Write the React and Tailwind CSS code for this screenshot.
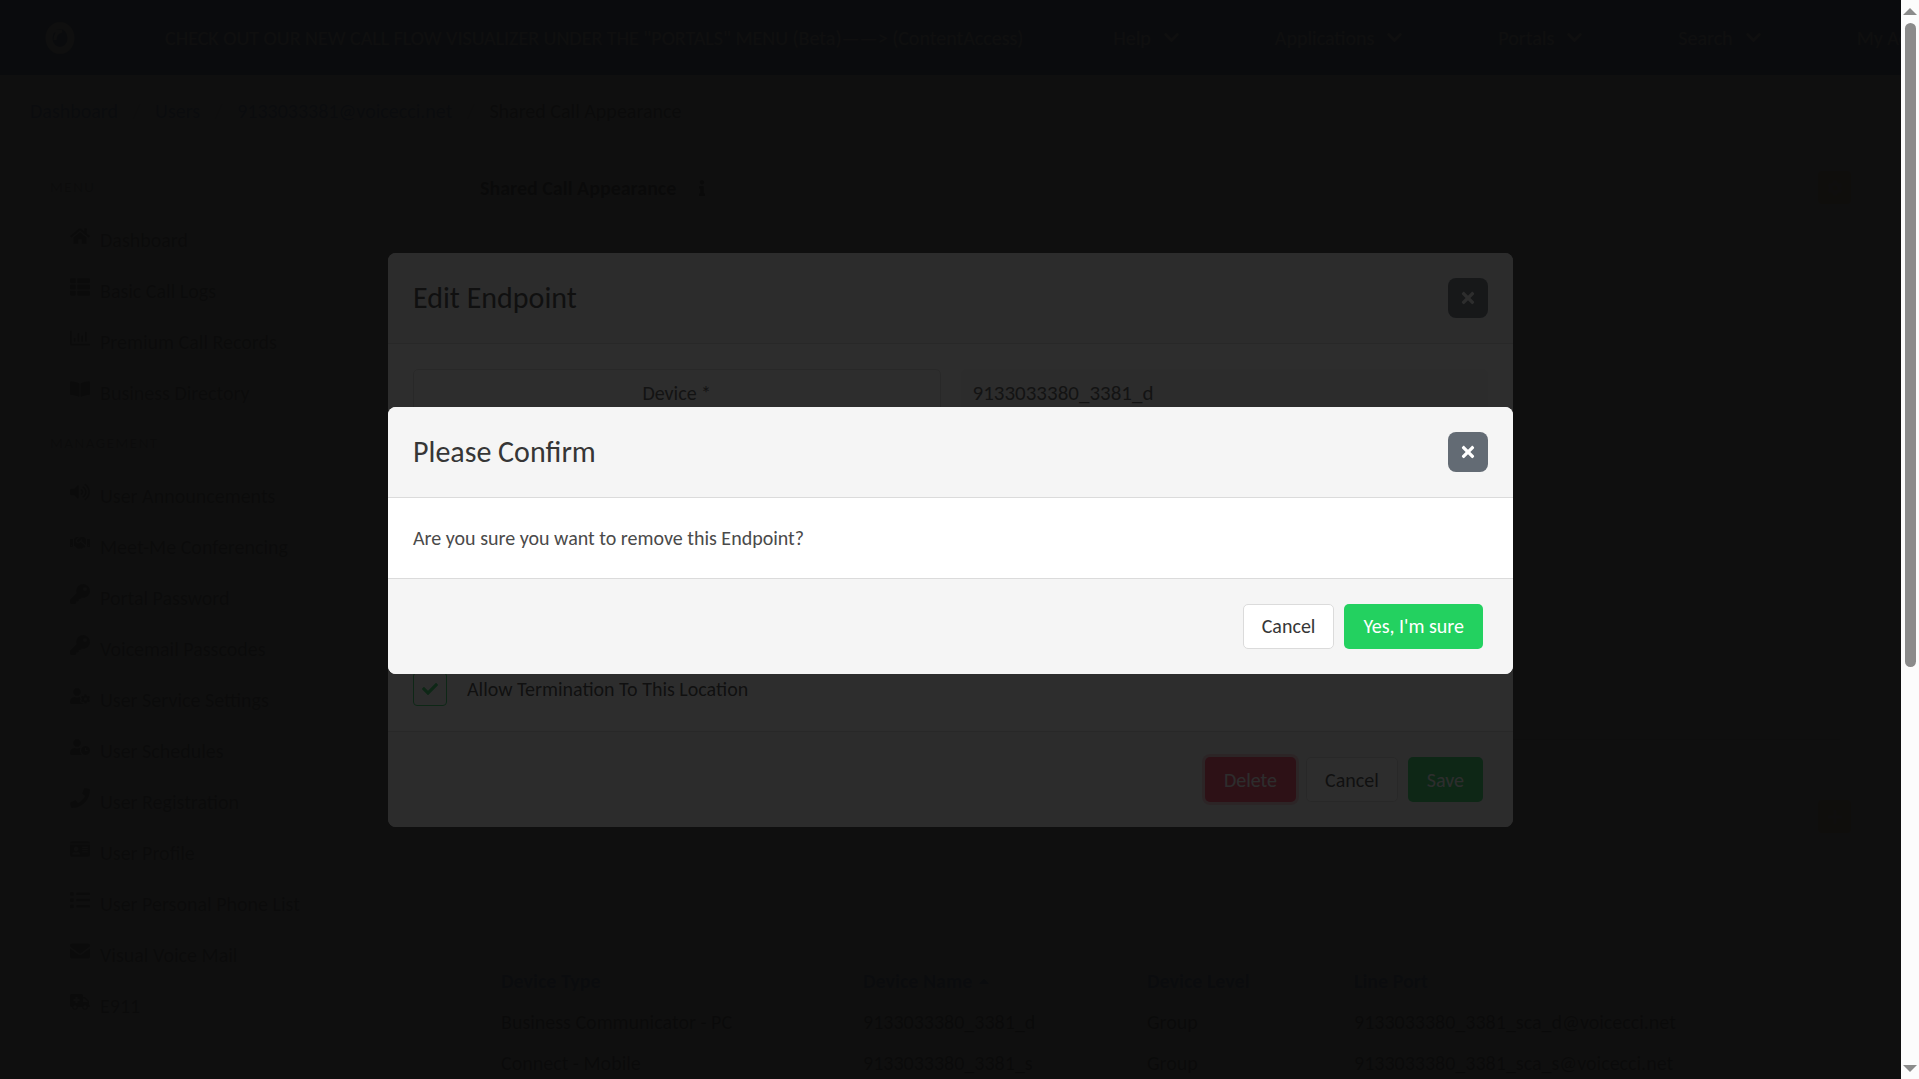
import {
  FaAmbulance,
  FaBookOpen,
  FaCaretUp,
  FaCheck,
  FaChevronDown,
  FaCog,
  FaEnvelope,
  FaHandshake,
  FaHome,
  FaIdCard,
  FaInfo,
  FaKey,
  FaList,
  FaPhone,
  FaPlus,
  FaRegChartBar,
  FaThList,
  FaTimes,
  FaUserClock,
  FaUserCog,
  FaVolumeUp,
} from "react-icons/fa";

const navItems = ["Help", "Applications", "Portals", "Search", "My Account"];

const breadcrumbs = ["Dashboard", "Users", "9133033381@voicecci.net", "Shared Call Appearance"];

const menuItems = [
  { label: "Dashboard", icon: FaHome },
  { label: "Basic Call Logs", icon: FaThList },
  { label: "Premium Call Records", icon: FaRegChartBar },
  { label: "Business Directory", icon: FaBookOpen },
];

const managementItems = [
  { label: "User Announcements", icon: FaVolumeUp },
  { label: "Meet-Me Conferencing", icon: FaHandshake },
  { label: "Portal Password", icon: FaKey },
  { label: "Voicemail Passcodes", icon: FaKey },
  { label: "User Service Settings", icon: FaUserCog },
  { label: "User Schedules", icon: FaUserClock },
  { label: "User Registration", icon: FaPhone },
  { label: "User Profile", icon: FaIdCard },
  { label: "User Personal Phone List", icon: FaList },
  { label: "Visual Voice Mail", icon: FaEnvelope },
  { label: "E911", icon: FaAmbulance },
];

const endpoints = [
  ["Business Communicator - PC", "9133033380_3381_d", "Group", "9133033380_3381_sca_d@voicecci.net"],
  ["Connect - Mobile", "9133033380_3381_s", "Group", "9133033380_3381_sca_s@voicecci.net"],
];

function Logo() {
  return (
    <svg viewBox="0 0 30 32" className="h-8 w-[30px] shrink-0" fill="none" stroke="#e8e8e8">
      <ellipse cx="15" cy="16" rx="11" ry="12.5" strokeWidth="7" />
      <path d="M5 9h12c-5 1-7 4-7 9M25 23c-2 3-5 4-9 4" strokeWidth="3" />
    </svg>
  );
}

function Navbar() {
  return (
    <nav className="flex h-[75px] items-center overflow-hidden bg-[#0a3c96] pl-[45px] whitespace-nowrap text-white">
      <Logo />
      <span className="ml-[90px] shrink-0">
        CHECK OUT OUR NEW CALL FLOW VISUALIZER UNDER THE "PORTALS" MENU (Beta)——&gt; (ContentAccess)
      </span>
      <div className="ml-[90px] flex gap-[95px]">
        {navItems.map((item) => (
          <a key={item} href="#" className="flex shrink-0 items-center gap-3">
            {item}
            <FaChevronDown className="size-[17px]" />
          </a>
        ))}
      </div>
    </nav>
  );
}

function Breadcrumb() {
  return (
    <ol className="flex h-[72px] items-center pl-[30px] text-[#3273dc]">
      {breadcrumbs.map((crumb, i) => (
        <li key={crumb} className="flex items-center">
          {i > 0 && <span className="w-[37px] text-center text-[#b5b5b5]">/</span>}
          <a href="#" className={i === breadcrumbs.length - 1 ? "text-[#363636]" : ""}>
            {crumb}
          </a>
        </li>
      ))}
    </ol>
  );
}

function MenuSection({ title, items }) {
  return (
    <section>
      <h2 className="pl-[50px] text-[15px] leading-6 tracking-widest text-[#7a7a7a] uppercase">{title}</h2>
      <ul className="mt-[15px]">
        {items.map(({ label, icon: Icon }) => (
          <li key={label}>
            <a href="#" className="flex h-[51px] items-center gap-2 pl-[67px] text-[#4a4a4a]">
              <span className="flex h-7 w-[25px] items-start justify-center">
                <Icon className="h-5 w-auto" />
              </span>
              {label}
            </a>
          </li>
        ))}
      </ul>
    </section>
  );
}

function SquareButton({ label, icon: Icon }) {
  return (
    <button type="button" aria-label={label} className="flex size-[33px] items-center justify-center rounded-sm bg-[#f5c26b] text-[#f5e0b8]">
      <Icon className="size-4" />
    </button>
  );
}

function EndpointTable() {
  return (
    <table className="ml-2 table-fixed text-left">
      <thead>
        <tr className="h-[41px] font-bold text-[#3273dc]">
          <th className="w-[362px] pl-[13px]">Device Type</th>
          <th className="w-[284px] pl-[13px]">
            <span className="flex items-center gap-1">
              Device Name <FaCaretUp className="size-4" />
            </span>
          </th>
          <th className="w-[207px] pl-[13px]">Device Level</th>
          <th className="w-[400px] pl-[13px]">Line Port</th>
        </tr>
      </thead>
      <tbody>
        {endpoints.map((row) => (
          <tr key={row[1]} className="h-[41px] text-[#1c1c1c]">
            {row.map((cell) => (
              <td key={cell} className="pl-[13px]">
                {cell}
              </td>
            ))}
          </tr>
        ))}
      </tbody>
    </table>
  );
}

function Content() {
  return (
    <main className="flex-1 pt-6 pr-[50px]">
      <header className="flex items-center justify-between">
        <h1 className="flex items-center gap-[18px] font-bold text-black">
          Shared Call Appearance
          <FaInfo className="size-4" />
        </h1>
        <SquareButton label="Settings" icon={FaCog} />
      </header>
      <div className="mt-[535px] mr-[11px] border-t border-[#dbdbdb]" />
      <div className="mt-[60px] mb-[127px] flex justify-end">
        <SquareButton label="Add endpoint" icon={FaPlus} />
      </div>
      <EndpointTable />
    </main>
  );
}

function Modal({ title, footer, children }) {
  return (
    <div className="absolute inset-0 flex items-center justify-center bg-[#0a0a0a]/86 pt-px">
      <div role="dialog" aria-label={title} className="flex w-full max-w-[1125px] flex-col overflow-hidden rounded-lg bg-white">
        <header className="flex items-center justify-between border-b border-[#dbdbdb] bg-[#f5f5f5] p-[25px]">
          <h2 className="text-[30px] leading-10 text-[#363636]">{title}</h2>
          <button type="button" aria-label="Close" className="flex size-10 items-center justify-center rounded-lg bg-[#636b74] text-white">
            <FaTimes className="size-[18px]" />
          </button>
        </header>
        {children}
        <footer className="flex justify-end gap-2.5 border-t border-[#dbdbdb] bg-[#f5f5f5] py-[25px] pr-[30px]">
          {footer}
        </footer>
      </div>
    </div>
  );
}

function Button({ className, children }) {
  return (
    <button type="button" className={`h-[45px] rounded-[5px] border px-[18px] ${className}`}>
      {children}
    </button>
  );
}

function EditEndpointModal() {
  return (
    <Modal
      title="Edit Endpoint"
      footer={
        <>
          <Button className="border-transparent bg-[#ff3860] text-white ring-3 ring-[#ff3860]/25">Delete</Button>
          <Button className="border-[#dbdbdb] bg-white text-[#363636]">Cancel</Button>
          <Button className="border-transparent bg-[#23d160] text-white">Save</Button>
        </>
      }
    >
      <div className="flex min-h-[387px] flex-col justify-between p-[25px]">
        <div className="grid grid-cols-2 gap-5">
          <label
            htmlFor="device"
            className="flex h-12 items-center justify-center rounded-[5px] border border-[#dbdbdb] bg-[#fafafa] text-[#4a4a4a]"
          >
            Device *
          </label>
          <input
            id="device"
            readOnly
            value="9133033380_3381_d"
            className="h-12 rounded-[5px] border border-[#f5f5f5] bg-[#f5f5f5] px-[11px] text-[21px] text-[#4a4a4a] outline-none"
          />
        </div>
        <label className="flex items-center gap-5 text-[#363636]">
          <span className="grid size-[34px] place-items-center">
            <input
              type="checkbox"
              defaultChecked
              className="col-start-1 row-start-1 size-[34px] appearance-none rounded-sm border border-[#23d160]"
            />
            <FaCheck className="pointer-events-none col-start-1 row-start-1 size-4 text-[#23d160]" />
          </span>
          Allow Termination To This Location
        </label>
      </div>
    </Modal>
  );
}

function ConfirmModal() {
  return (
    <Modal
      title="Please Confirm"
      footer={
        <>
          <Button className="border-[#dbdbdb] bg-white text-[#363636]">Cancel</Button>
          <Button className="border-transparent bg-[#23d160] text-white">Yes, I'm sure</Button>
        </>
      }
    >
      <p className="p-[25px] leading-[30px] text-[#4a4a4a]">Are you sure you want to remove this Endpoint?</p>
    </Modal>
  );
}

function Scrollbar() {
  return (
    <div className="flex w-[18px] shrink-0 flex-col items-center bg-[#fcfcfc] pt-2 pb-[7px]">
      <svg viewBox="0 0 14 7" className="h-[7px] w-3.5" fill="#8b8b8b">
        <path d="M7 0l7 7H0z" />
      </svg>
      <div className="mt-2 h-[60.5%] w-[11px] rounded-full bg-[#8b8b8b]" />
      <svg viewBox="0 0 14 7" className="mt-auto h-[7px] w-3.5" fill="#8b8b8b">
        <path d="M0 0h14L7 7z" />
      </svg>
    </div>
  );
}

export default function App() {
  return (
    <div className="flex h-screen overflow-hidden font-['Carlito','Lato',sans-serif] text-[20px] leading-6">
      <div className="relative min-w-0 flex-1 overflow-hidden bg-white">
        <Navbar />
        <Breadcrumb />
        <div className="flex">
          <aside className="flex w-[480px] shrink-0 flex-col gap-[13px] pt-7">
            <MenuSection title="Menu" items={menuItems} />
            <MenuSection title="Management" items={managementItems} />
          </aside>
          <Content />
        </div>
        <EditEndpointModal />
        <ConfirmModal />
      </div>
      <Scrollbar />
    </div>
  );
}
